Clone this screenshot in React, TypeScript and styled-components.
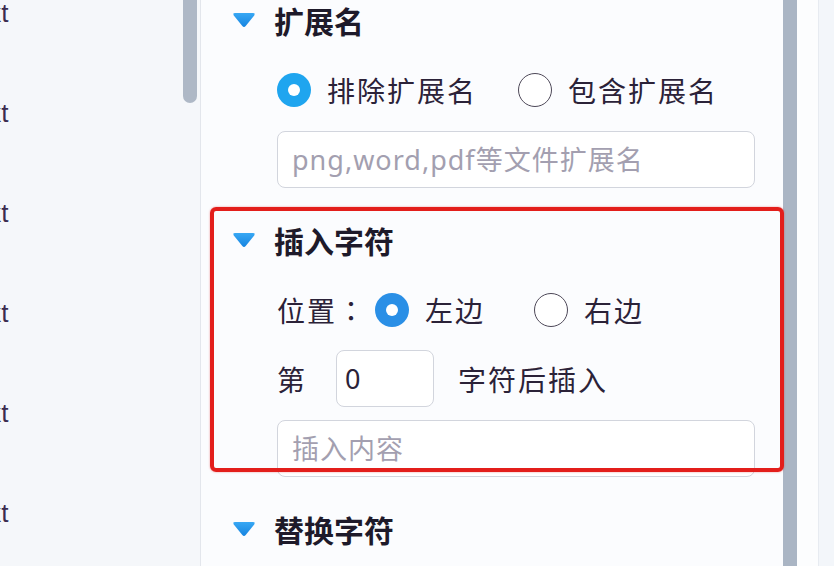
import React from 'react'
import styled, { createGlobalStyle } from 'styled-components'

const GlobalStyle = createGlobalStyle`
  html, body {
    margin: 0;
    padding: 0;
  }
  body {
    font-family: "Noto Sans CJK SC", "Noto Sans", sans-serif;
    background: #fbfcfe;
    overflow: hidden;
  }
`

const Screen = styled.div`
  display: flex;
  width: 834px;
  height: 566px;
  overflow: hidden;
`

const FileList = styled.div`
  display: flex;
  width: 200px;
  flex-shrink: 0;
  background: #f5f7fa;
  border-right: 1px solid #e3e6ec;
`

const Names = styled.ul`
  flex: 1;
  margin: 0;
  padding: 0;
  list-style: none;
  overflow: hidden;
`

const NameItem = styled.li`
  height: 100px;
  margin-left: -19px;
  font-family: "Liberation Sans", sans-serif;
  font-size: 26px;
  line-height: 26px;
  color: #3b2c4f;
  white-space: nowrap;
`

const ListTrack = styled.div`
  width: 14px;
  margin-right: 3px;
`

const ListThumb = styled.div`
  height: 103px;
  background: #aeb8c6;
  border-radius: 0 0 7px 7px;
`

const Panel = styled.div`
  position: relative;
  width: 582px;
  flex-shrink: 0;
  box-sizing: border-box;
  padding: 0 28px 0 31px;
  background: #fbfcfe;
`

const Section = styled.section<{ $top?: number }>`
  position: relative;
  margin-top: ${(p) => p.$top ?? 0}px;
`

const Highlight = styled.div`
  position: absolute;
  top: -13px;
  left: -22px;
  right: -29px;
  height: 265px;
  box-sizing: border-box;
  border: 4px solid #e31e1b;
  border-radius: 6px;
  box-shadow: 0 0 2px rgba(227, 30, 27, 0.5);
  pointer-events: none;
  z-index: 2;
`

const Header = styled.div`
  display: flex;
  align-items: center;
  gap: 18px;
  height: 40px;
  font-size: 30px;
  font-weight: 700;
  color: #1e1a2a;
`

const Body = styled.div`
  display: flex;
  flex-direction: column;
  padding-left: 45px;
  margin-top: 30px;
`

const OptionRow = styled.div`
  display: flex;
  align-items: center;
  height: 40px;
  font-size: 28px;
  color: #2b2238;
`

const RowLabel = styled.span`
  margin-right: 8px;
  font-family: "Noto Sans CJK TC", "Noto Sans CJK SC", sans-serif;
  letter-spacing: 2px;
`

const Option = styled.label<{ $space: number }>`
  display: flex;
  align-items: center;
  gap: 16px;
  margin-right: ${(p) => p.$space}px;
  letter-spacing: 2px;
`

const Radio = styled.span<{ $checked?: boolean; $color?: string }>`
  position: relative;
  width: 34px;
  height: 34px;
  box-sizing: border-box;
  border-radius: 50%;
  flex-shrink: 0;
  background: ${(p) => (p.$checked ? p.$color : '#fff')};
  border: ${(p) => (p.$checked ? 'none' : '1.5px solid #4d4858')};
  &::after {
    content: '';
    display: ${(p) => (p.$checked ? 'block' : 'none')};
    position: absolute;
    top: 11px;
    left: 11px;
    width: 12px;
    height: 12px;
    border-radius: 50%;
    background: #fff;
  }
`

const CountRow = styled.div`
  display: flex;
  align-items: center;
  height: 57px;
  margin-top: 20px;
  font-size: 28px;
  color: #2b2238;
  letter-spacing: 2px;
`

const CountInput = styled.input`
  width: 98px;
  height: 57px;
  box-sizing: border-box;
  margin: 0 24px 0 29px;
  padding: 0 8px;
  border: 1px solid #d2d5dd;
  border-radius: 8px;
  background: #fff;
  font-family: "Noto Sans", sans-serif;
  font-size: 27px;
  color: #2b2238;
  outline: none;
`

const TextField = styled.input<{ $top: number }>`
  width: 100%;
  height: 57px;
  box-sizing: border-box;
  margin-top: ${(p) => p.$top}px;
  padding: 0 14px;
  border: 1px solid #d2d5dd;
  border-radius: 8px;
  background: #fff;
  font-family: "Noto Sans", "Noto Sans CJK SC", sans-serif;
  font-size: 27px;
  color: #2b2238;
  outline: none;
  &::placeholder {
    color: #a39fb0;
    letter-spacing: 1px;
  }
`

const ScrollTrack = styled.div`
  width: 14px;
  flex-shrink: 0;
  background: #aab5c4;
`

const Gutter = styled.div`
  width: 21px;
  flex-shrink: 0;
  background: #fcfdfe;
  border-right: 1px solid #e7ebf1;
`

const Edge = styled.div`
  flex: 1;
  background: #f3f6fa;
`

const Caret: React.FC = () => (
  <svg width="24" height="16" viewBox="0 0 24 16">
    <defs>
      <linearGradient id="caretFill" x1="0" y1="0" x2="0" y2="1">
        <stop offset="0" stopColor="#38a8f4" />
        <stop offset="1" stopColor="#1684e0" />
      </linearGradient>
    </defs>
    <path
      d="M3 1 H21 Q23.6 1 22.2 3.4 L13.7 14 Q12 16 10.3 14 L1.8 3.4 Q0.4 1 3 1 Z"
      fill="url(#caretFill)"
    />
  </svg>
)

const names = ['txt', 'txt', 'txt', 'txt', 'txt', 'txt']

const App: React.FC = () => {
  return (
    <>
      <GlobalStyle />
      <Screen>
        <FileList>
          <Names>
            {names.map((n, i) => (
              <NameItem key={i}>{n}</NameItem>
            ))}
          </Names>
          <ListTrack>
            <ListThumb />
          </ListTrack>
        </FileList>

        <Panel>
          <Section>
            <Header>
              <Caret />
              扩展名
            </Header>
            <Body>
              <OptionRow>
                <Option $space={41}>
                  <Radio $checked $color="#1fa5ef" />
                  排除扩展名
                </Option>
                <Option $space={0}>
                  <Radio />
                  包含扩展名
                </Option>
              </OptionRow>
              <TextField $top={21} placeholder="png,word,pdf等文件扩展名" />
            </Body>
          </Section>

          <Section $top={32}>
            <Highlight />
            <Header>
              <Caret />
              插入字符
            </Header>
            <Body>
              <OptionRow>
                <RowLabel>位置：</RowLabel>
                <Option $space={49}>
                  <Radio $checked $color="#2a8fe6" />
                  左边
                </Option>
                <Option $space={0}>
                  <Radio />
                  右边
                </Option>
              </OptionRow>
              <CountRow>
                第
                <CountInput defaultValue="0" />
                字符后插入
              </CountRow>
              <TextField $top={13} placeholder="插入内容" />
            </Body>
          </Section>

          <Section $top={32}>
            <Header>
              <Caret />
              替换字符
            </Header>
          </Section>
        </Panel>

        <ScrollTrack />
        <Gutter />
        <Edge />
      </Screen>
    </>
  )
}

export default App
